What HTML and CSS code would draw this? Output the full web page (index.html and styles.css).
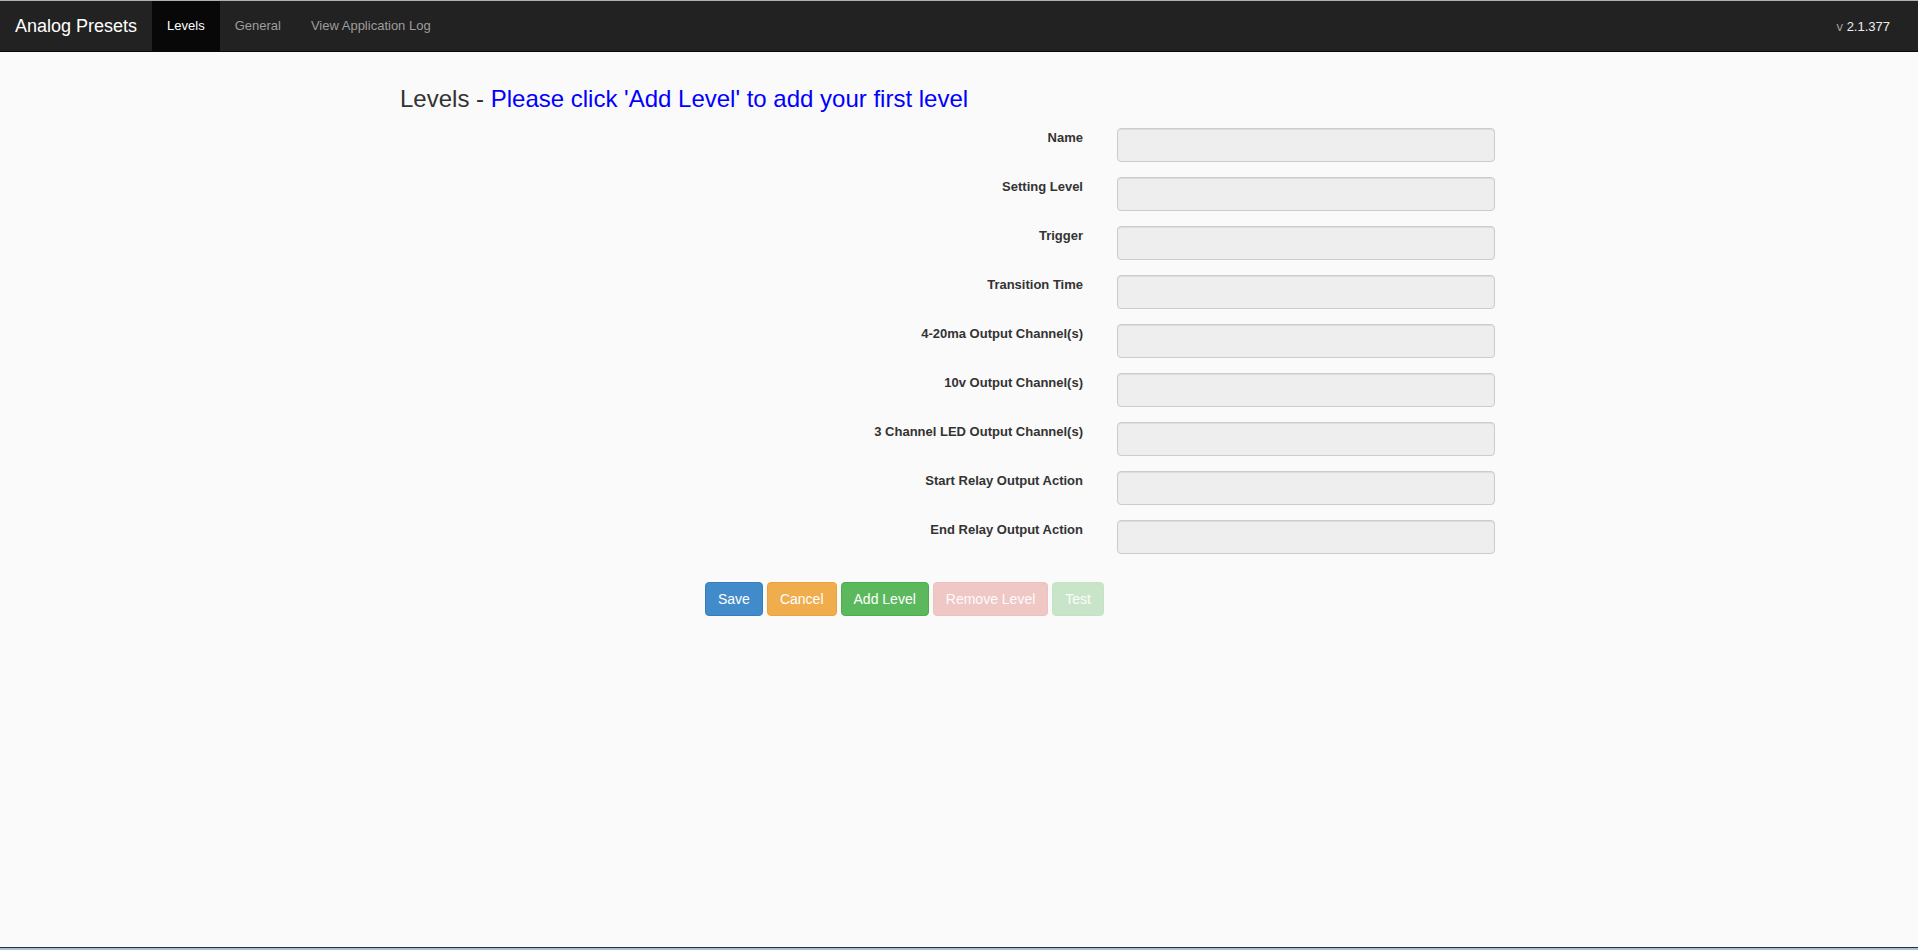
FILE: index.html
```html
<!DOCTYPE html>
<html lang="en">
<head>
  <meta charset="UTF-8">
  <title>Analog Presets</title>
  <link rel="stylesheet" href="styles.css">
</head>
<body>

  <nav class="navbar">
    <a class="brand" href="#">Analog Presets</a>
    <ul class="nav">
      <li class="active"><a href="#">Levels</a></li>
      <li><a href="#">General</a></li>
      <li><a href="#">View Application Log</a></li>
    </ul>
    <div class="version">v <span>2.1.377</span></div>
  </nav>

  <div class="page">
    <h3 class="title">Levels - <span class="hint">Please click 'Add Level' to add your first level</span></h3>

    <form class="level-form">
      <div class="form-row">
        <label>Name</label>
        <input type="text" disabled>
      </div>
      <div class="form-row">
        <label>Setting Level</label>
        <input type="text" disabled>
      </div>
      <div class="form-row">
        <label>Trigger</label>
        <input type="text" disabled>
      </div>
      <div class="form-row">
        <label>Transition Time</label>
        <input type="text" disabled>
      </div>
      <div class="form-row">
        <label>4-20ma Output Channel(s)</label>
        <input type="text" disabled>
      </div>
      <div class="form-row">
        <label>10v Output Channel(s)</label>
        <input type="text" disabled>
      </div>
      <div class="form-row">
        <label>3 Channel LED Output Channel(s)</label>
        <input type="text" disabled>
      </div>
      <div class="form-row">
        <label>Start Relay Output Action</label>
        <input type="text" disabled>
      </div>
      <div class="form-row">
        <label>End Relay Output Action</label>
        <input type="text" disabled>
      </div>

      <div class="buttons">
        <button type="button" class="btn btn-primary">Save</button>
        <button type="button" class="btn btn-warning">Cancel</button>
        <button type="button" class="btn btn-success">Add Level</button>
        <button type="button" class="btn btn-danger" disabled>Remove Level</button>
        <button type="button" class="btn btn-success" disabled>Test</button>
      </div>
    </form>
  </div>

  <div class="taskbar"></div>

</body>
</html>
```

FILE: styles.css
```css
body {
  margin: 0;
  font-family: 'Liberation Sans', Arial, sans-serif;
  font-size: 14px;
  color: #333;
  background-color: #fafafa;
}

.navbar {
  display: flex;
  align-items: center;
  height: 50px;
  background-color: #222;
  border-top: 1px solid #b0b0b0;
  border-bottom: 1px solid #080808;
}

.brand {
  padding: 0 15px;
  font-size: 18px;
  line-height: 50px;
  color: #fff;
  text-decoration: none;
}

.nav {
  display: flex;
  margin: 0;
  padding: 0;
  list-style: none;
}

.nav a {
  display: block;
  padding: 0 15px;
  font-size: 13px;
  line-height: 50px;
  color: #9d9d9d;
  text-decoration: none;
}

.nav .active a {
  color: #fff;
  background-color: #080808;
}

.version {
  margin-left: auto;
  padding-right: 28px;
  font-size: 13px;
  color: #9d9d9d;
}

.version span {
  color: #eee;
}

.page {
  width: 1118px;
  margin: 0 auto;
}

.title {
  margin: 34px 0 16px;
  font-size: 24px;
  font-weight: normal;
  line-height: 26px;
  color: #333;
}

.hint {
  color: #00f;
}

.form-row {
  display: flex;
  align-items: flex-start;
  margin-bottom: 15px;
}

.form-row label {
  width: 683px;
  margin-right: 34px;
  font-size: 13px;
  font-weight: bold;
  line-height: 20px;
  text-align: right;
}

.form-row input {
  box-sizing: border-box;
  width: 378px;
  height: 34px;
  padding: 6px 12px;
  border: 1px solid #ccc;
  border-radius: 4px;
  background-color: #eee;
  box-shadow: inset 0 1px 1px rgba(0, 0, 0, 0.075);
}

.buttons {
  display: flex;
  gap: 4px;
  margin-top: 28px;
  margin-left: 305px;
}

.btn {
  height: 34px;
  padding: 6px 12px;
  border: 1px solid transparent;
  border-radius: 4px;
  font-family: inherit;
  font-size: 14px;
  line-height: 20px;
  color: #fff;
  cursor: pointer;
}

.btn[disabled] {
  opacity: 0.3;
  cursor: not-allowed;
}

.btn-primary {
  background-color: #428bca;
  border-color: #357ebd;
}

.btn-warning {
  background-color: #f0ad4e;
  border-color: #eea236;
}

.btn-success {
  background-color: #5cb85c;
  border-color: #4cae4c;
}

.btn-danger {
  background-color: #d9534f;
  border-color: #d43f3a;
}

.taskbar {
  position: fixed;
  left: 0;
  right: 0;
  bottom: 0;
  height: 2px;
  background-color: #a9bfd4;
  border-top: 1px solid #1f3145;
}
```
